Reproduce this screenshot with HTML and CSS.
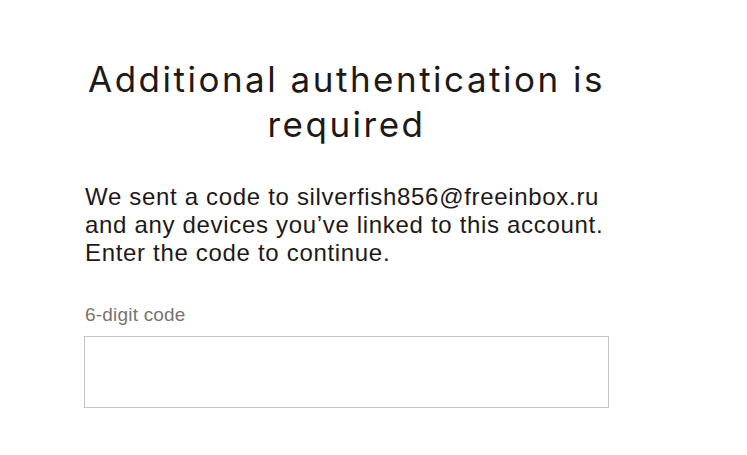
FILE: index.html
```html
<!DOCTYPE html>
<html lang="en">
<head>
<meta charset="utf-8">
<title>Additional authentication</title>
<link rel="stylesheet" href="styles.css">
</head>
<body>
<main class="panel">
  <h1 class="title">Additional authentication is required</h1>
  <p class="intro">We sent a code to silverfish856@freeinbox.ru<br>and any devices you’ve linked to this account.<br>Enter the code to continue.</p>
  <label class="field">
    <span class="field-label">6-digit code</span>
    <input class="field-input" type="text" inputmode="numeric" autocomplete="one-time-code">
  </label>
</main>
</body>
</html>
```
FILE: styles.css
```css
html, body {
  margin: 0;
  padding: 0;
  background: #ffffff;
}
.panel {
  width: 525px;
  margin-left: 84px;
  padding-top: 57px;
  display: flex;
  flex-direction: column;
}
.title {
  margin: 0;
  font-family: "Inter", "Noto Sans", sans-serif;
  font-weight: 400;
  font-size: 35px;
  line-height: 45px;
  text-align: center;
  color: #1e1919;
  letter-spacing: 2.5px;
}
.intro {
  margin: 36px 0 0 1px;
  font-family: "Liberation Sans", Arial, sans-serif;
  font-size: 24px;
  line-height: 28px;
  letter-spacing: 0.68px;
  color: #1e1919;
  white-space: nowrap;
}
.field {
  display: flex;
  flex-direction: column;
  margin-top: 37px;
}
.field-label {
  font-family: "Liberation Sans", Arial, sans-serif;
  font-size: 19px;
  line-height: 22px;
  letter-spacing: 0.2px;
  color: #77736f;
  margin-left: 1px;
}
.field-input {
  margin-top: 10px;
  box-sizing: border-box;
  width: 525px;
  height: 72px;
  border: 1px solid #c4c4c4;
  border-radius: 0;
  outline: none;
  background: #fff;
}
```
